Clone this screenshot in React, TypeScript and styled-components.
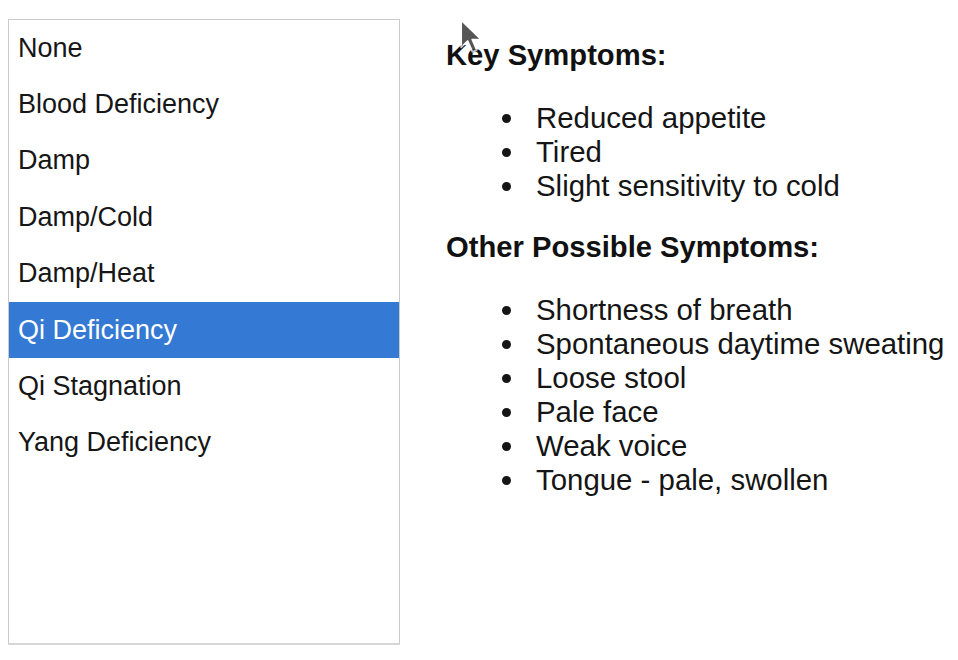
import React, { useState } from 'react';
import styled, { createGlobalStyle } from 'styled-components';

const patterns = [
  'None',
  'Blood Deficiency',
  'Damp',
  'Damp/Cold',
  'Damp/Heat',
  'Qi Deficiency',
  'Qi Stagnation',
  'Yang Deficiency'
];

const keySymptoms = ['Reduced appetite', 'Tired', 'Slight sensitivity to cold'];

const otherSymptoms = [
  'Shortness of breath',
  'Spontaneous daytime sweating',
  'Loose stool',
  'Pale face',
  'Weak voice',
  'Tongue - pale, swollen'
];

export default function App() {
  const [selected, setSelected] = useState('Qi Deficiency');

  return (
    <>
      <GlobalStyle />
      <Page>
        <ListBox>
          {patterns.map((p) => (
            <Option key={p} active={p === selected} onClick={() => setSelected(p)}>
              {p}
            </Option>
          ))}
        </ListBox>
        <Details>
          <Heading>Key Symptoms:</Heading>
          <Symptoms>
            {keySymptoms.map((s) => (
              <Symptom key={s}>{s}</Symptom>
            ))}
          </Symptoms>
          <Heading>Other Possible Symptoms:</Heading>
          <Symptoms>
            {otherSymptoms.map((s) => (
              <Symptom key={s}>{s}</Symptom>
            ))}
          </Symptoms>
        </Details>
        <Pointer width='26' height='38' viewBox='0 0 12 17.5'>
          <path
            d='M1 1 L1 13.5 L4 10.6 L6.2 15.6 L8.2 14.7 L6.1 9.9 L10.2 9.9 Z'
            fill='#1e1e1e'
            stroke='#ffffff'
            strokeWidth='0.8'
            strokeLinejoin='round'
          />
        </Pointer>
      </Page>
    </>
  );
}

const GlobalStyle = createGlobalStyle`
  html, body {
    margin: 0;
    padding: 0;
    background: #ffffff;
  }
  body {
    font-family: 'Liberation Sans', Arial, sans-serif;
    color: #141414;
  }
`;

const Page = styled.div`
  position: relative;
  width: 958px;
  height: 660px;
  overflow: hidden;
  display: flex;
  align-items: flex-start;
  padding: 19px 0 0 8px;
  box-sizing: border-box;
  gap: 46px;
`;

const ListBox = styled.div`
  width: 392px;
  height: 626px;
  box-sizing: border-box;
  border: 1px solid #cbcbcb;
  border-bottom: 2px solid #d6d6d6;
  background: #ffffff;
  display: flex;
  flex-direction: column;
`;

const Option = styled.div<{ active?: boolean }>`
  height: 56.4px;
  flex-shrink: 0;
  display: flex;
  align-items: center;
  padding-left: 9px;
  font-size: 27px;
  color: ${(p) => (p.active ? '#ffffff' : '#161616')};
  background: ${(p) => (p.active ? '#3479d3' : 'transparent')};
  cursor: default;
  user-select: none;
`;

const Details = styled.div`
  padding-top: 19px;
  display: flex;
  flex-direction: column;
`;

const Heading = styled.h3`
  margin: 0 0 29px;
  font-size: 29.2px;
  line-height: 34px;
  font-weight: 700;
  color: #111111;
`;

const Symptoms = styled.ul`
  list-style: none;
  margin: 0 0 27px;
  padding: 0 0 0 56px;
`;

const Symptom = styled.li`
  display: flex;
  align-items: center;
  font-size: 29.4px;
  line-height: 34px;
  color: #151515;
  white-space: nowrap;

  &::before {
    content: '';
    width: 9px;
    height: 9px;
    border-radius: 50%;
    background: #151515;
    margin-right: 25px;
    flex-shrink: 0;
  }
`;

const Pointer = styled.svg`
  position: absolute;
  left: 459px;
  top: 18px;
  pointer-events: none;
  opacity: 0.75;
`;
